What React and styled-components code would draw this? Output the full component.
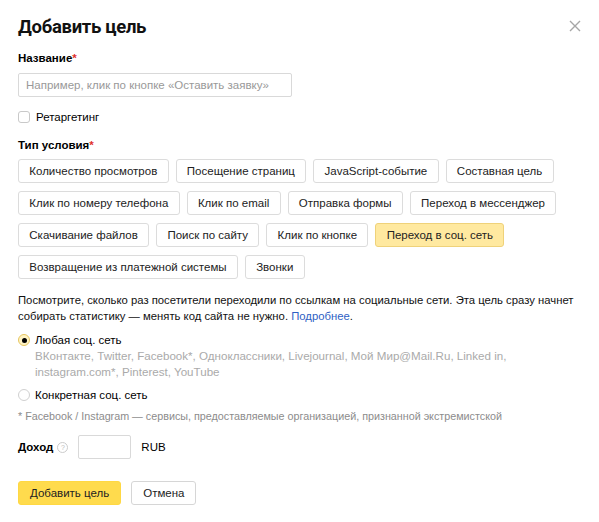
import React from 'react';
import styled, { createGlobalStyle } from 'styled-components';

const GlobalStyle = createGlobalStyle`
	html, body {
		margin: 0;
		padding: 0;
		background: #fff;
	}
	body {
		font-family: 'Liberation Sans', Arial, sans-serif;
		color: #000;
	}
`;

const conditions = [
	['Количество просмотров', 'Посещение страниц', 'JavaScript-событие', 'Составная цель'],
	['Клик по номеру телефона', 'Клик по email', 'Отправка формы', 'Переход в мессенджер'],
	['Скачивание файлов', 'Поиск по сайту', 'Клик по кнопке', 'Переход в соц. сеть'],
	['Возвращение из платежной системы', 'Звонки'],
];

function App() {
	return (
		<Wrapper>
			<GlobalStyle />
			{/* header */}
			<Header>
				<Title>Добавить цель</Title>
				<Close aria-label="close">
					<svg width="12" height="12" viewBox="0 0 12 12">
						<path d="M1 1L11 11M11 1L1 11" stroke="#a6a6a6" strokeWidth="1.4" />
					</svg>
				</Close>
			</Header>

			<Label>
				Название<Star>*</Star>
			</Label>
			<NameInput placeholder="Например, клик по кнопке «Оставить заявку»" />

			<CheckRow>
				<CheckBox />
				<span>Ретаргетинг</span>
			</CheckRow>

			<Label $gap={12}>
				Тип условия<Star>*</Star>
			</Label>
			<Conditions>
				{conditions.map((row, i) => (
					<ConditionRow key={i}>
						{row.map((c) => (
							<Chip key={c} $active={c === 'Переход в соц. сеть'}>
								{c}
							</Chip>
						))}
					</ConditionRow>
				))}
			</Conditions>

			<Description>
				Посмотрите, сколько раз посетители переходили по ссылкам на социальные сети. Эта цель сразу начнет
				<br />
				собирать статистику — менять код сайта не нужно. <Link>Подробнее</Link>.
			</Description>

			<RadioGroup>
				<RadioItem>
					<Radio $checked />
					<RadioBody>
						<RadioLabel>Любая соц. сеть</RadioLabel>
						<RadioHint>
							ВКонтакте, Twitter, Facebook*, Одноклассники, Livejournal, Мой Мир@Mail.Ru, Linked in,
							<br />
							instagram.com*, Pinterest, YouTube
						</RadioHint>
					</RadioBody>
				</RadioItem>
				<RadioItem>
					<Radio />
					<RadioBody>
						<RadioLabel>Конкретная соц. сеть</RadioLabel>
					</RadioBody>
				</RadioItem>
			</RadioGroup>

			<Footnote>
				* Facebook / Instagram — сервисы, предоставляемые организацией, признанной экстремистской
			</Footnote>

			<IncomeRow>
				<IncomeLabel>Доход</IncomeLabel>
				<Help>?</Help>
				<IncomeInput />
				<Currency>RUB</Currency>
			</IncomeRow>

			<Actions>
				<Button $primary>Добавить цель</Button>
				<Button>Отмена</Button>
			</Actions>
		</Wrapper>
	);
}

export default App;

const Wrapper = styled.div`
	width: 599px;
	height: 522px;
	box-sizing: border-box;
	padding: 14px 18px 0 18px;
	font-size: 11.5px;
`;

const Header = styled.div`
	display: flex;
	justify-content: space-between;
	align-items: flex-start;
`;

const Title = styled.h1`
	margin: 0;
	font-family: Roboto, 'Liberation Sans', sans-serif;
	font-size: 18.5px;
	line-height: 26px;
	font-weight: 700;
	letter-spacing: -0.3px;
	color: #111;
`;

const Close = styled.div`
	margin: 3px -3px 0 0;
	width: 18px;
	height: 18px;
	display: flex;
	align-items: center;
	justify-content: center;
`;

const Label = styled.div`
	margin-top: ${(p) => p.$gap || 10}px;
	font-size: 11.5px;
	line-height: 16px;
	font-weight: 700;
`;

const Star = styled.span`
	color: #e0312c;
`;

const NameInput = styled.input`
	display: block;
	margin-top: 7px;
	width: 274px;
	height: 24px;
	box-sizing: border-box;
	border: 1px solid #d9d9d9;
	border-radius: 2px;
	padding: 0 7px;
	font-family: inherit;
	font-size: 11.5px;
	outline: none;

	&::placeholder {
		color: #999;
	}
`;

const CheckRow = styled.label`
	display: flex;
	align-items: center;
	gap: 6px;
	margin-top: 12px;
	font-size: 11.5px;
	line-height: 16px;
`;

const CheckBox = styled.span`
	width: 12px;
	height: 12px;
	box-sizing: border-box;
	border: 1px solid #c9c9c9;
	border-radius: 3px;
	background: #fff;
`;

const Conditions = styled.div`
	display: flex;
	flex-direction: column;
	gap: 8px;
	margin-top: 6px;
`;

const ConditionRow = styled.div`
	display: flex;
	gap: 7px;
`;

const Chip = styled.div`
	height: 24px;
	box-sizing: border-box;
	padding: 0 10.3px;
	display: flex;
	align-items: center;
	white-space: nowrap;
	font-size: 11.5px;
	border-radius: 3px;
	border: 1px solid ${(p) => (p.$active ? '#efd27a' : '#dcdcdc')};
	background: ${(p) => (p.$active ? '#ffe9a0' : '#fff')};
	color: #222;
`;

const Description = styled.p`
	margin: 13px 0 0;
	font-size: 11.3px;
	line-height: 16px;
	white-space: nowrap;
	color: #111;
`;

const Link = styled.a`
	color: #2f5fc4;
`;

const RadioGroup = styled.div`
	margin-top: 8px;
	display: flex;
	flex-direction: column;
	gap: 7px;
`;

const RadioItem = styled.div`
	display: flex;
	align-items: flex-start;
	gap: 5px;
`;

const Radio = styled.span`
	flex: none;
	margin-top: 2px;
	width: 12px;
	height: 12px;
	box-sizing: border-box;
	border-radius: 50%;
	border: 1px solid ${(p) => (p.$checked ? '#e6c660' : '#d0d0d0')};
	background: ${(p) => (p.$checked ? '#fff3c4' : '#fff')};
	display: flex;
	align-items: center;
	justify-content: center;

	&::after {
		content: '';
		display: ${(p) => (p.$checked ? 'block' : 'none')};
		width: 5px;
		height: 5px;
		border-radius: 50%;
		background: #000;
	}
`;

const RadioBody = styled.div`
	display: flex;
	flex-direction: column;
`;

const RadioLabel = styled.div`
	font-size: 11.5px;
	line-height: 16px;
`;

const RadioHint = styled.div`
	font-size: 11.6px;
	line-height: 16px;
	white-space: nowrap;
	color: #aaa;
`;

const Footnote = styled.div`
	margin-top: 6px;
	font-size: 10.75px;
	line-height: 14px;
	color: #8c8c8c;
`;

const IncomeRow = styled.div`
	display: flex;
	align-items: center;
	margin-top: 12px;
`;

const IncomeLabel = styled.span`
	font-weight: 700;
	font-size: 11.5px;
`;

const Help = styled.span`
	margin-left: 4px;
	width: 9px;
	height: 9px;
	border-radius: 50%;
	border: 1px solid #ccc;
	color: #bbb;
	font-size: 7px;
	display: flex;
	align-items: center;
	justify-content: center;
`;

const IncomeInput = styled.input`
	margin-left: 10px;
	width: 53px;
	height: 24px;
	box-sizing: border-box;
	border: 1px solid #d9d9d9;
	border-radius: 2px;
	outline: none;
`;

const Currency = styled.span`
	margin-left: 10px;
	font-size: 11.5px;
`;

const Actions = styled.div`
	display: flex;
	gap: 10px;
	margin-top: 22px;
`;

const Button = styled.div`
	height: 24px;
	box-sizing: border-box;
	padding: 0 11px;
	display: flex;
	align-items: center;
	font-size: 11.5px;
	border-radius: 3px;
	border: 1px solid ${(p) => (p.$primary ? '#ffd843' : '#d6d6d6')};
	background: ${(p) => (p.$primary ? '#ffdb4d' : '#fff')};
	color: #222;
`;
